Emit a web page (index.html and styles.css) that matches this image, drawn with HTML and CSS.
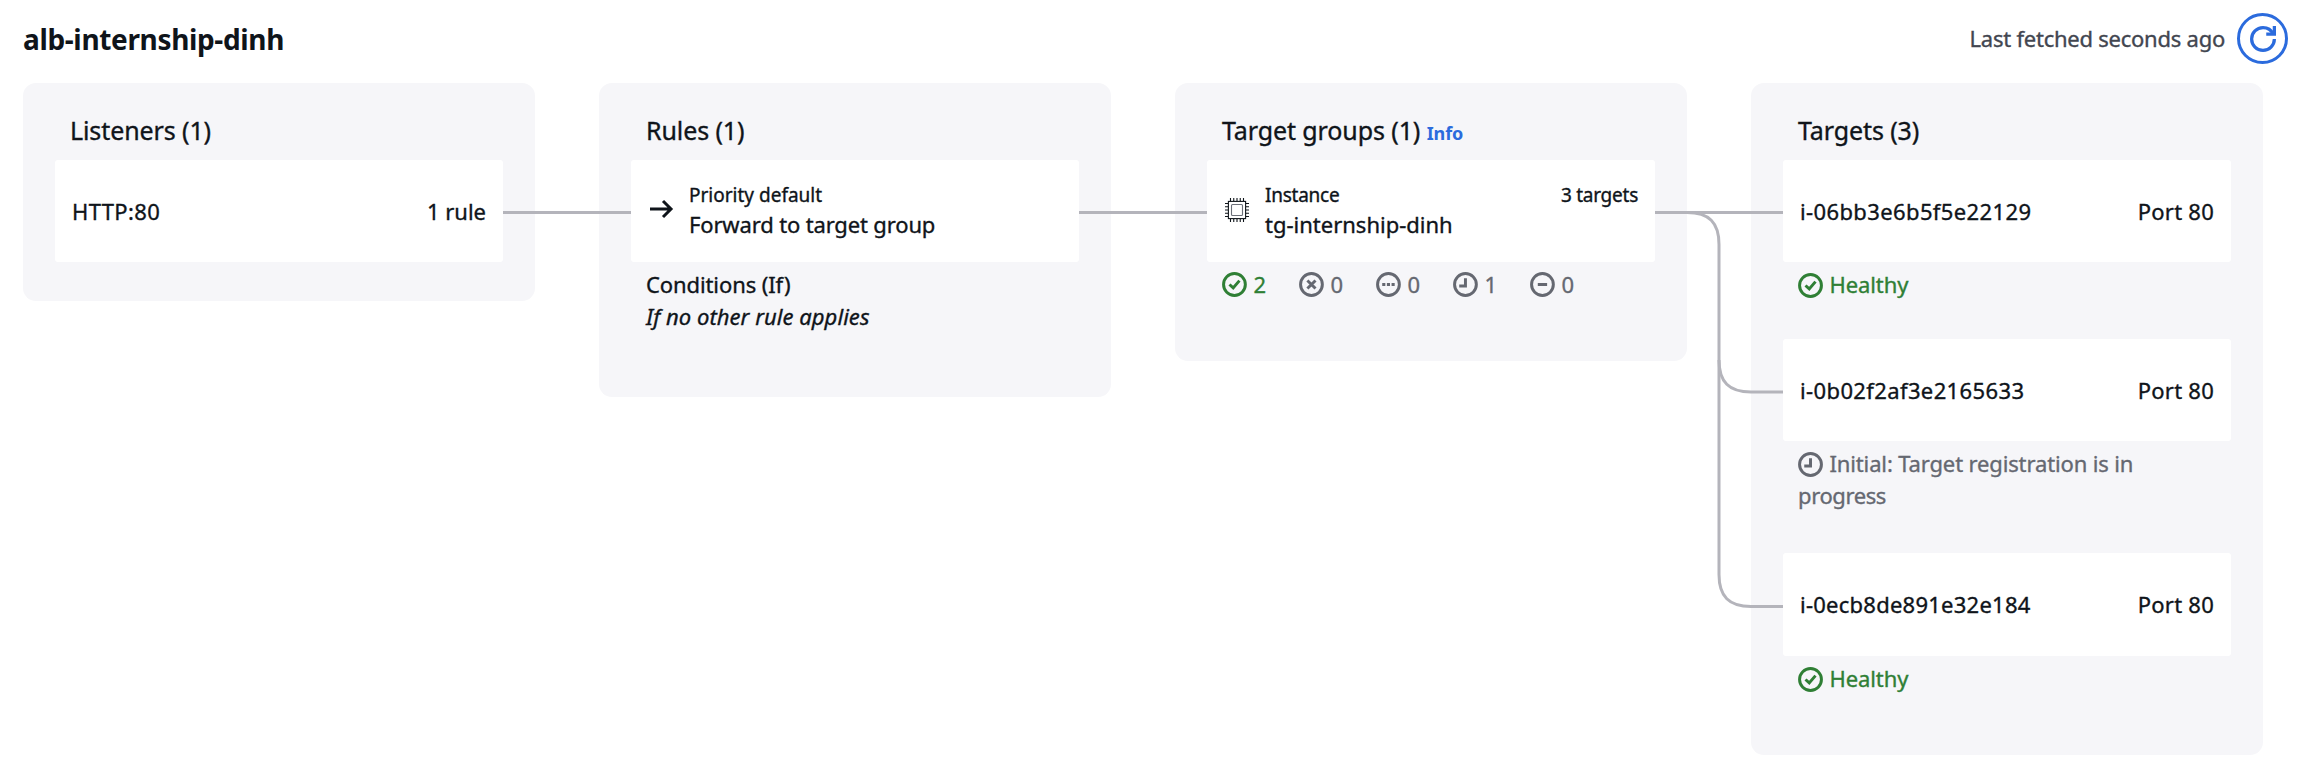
FILE: index.html
```html
<!DOCTYPE html>
<html lang="en">
<head>
<meta charset="utf-8">
<title>Resource map</title>
<link rel="stylesheet" href="styles.css">
</head>
<body>
<svg class="symbols" aria-hidden="true">
  <symbol id="i-ok" viewBox="0 0 16 16"><circle cx="8" cy="8" r="7"/><path d="m4.8 8 2.4 2.2 4-4.7"/></symbol>
  <symbol id="i-fail" viewBox="0 0 16 16"><circle cx="8" cy="8" r="7"/><path d="m5.4 5.4 5.2 5.2M10.6 5.4l-5.2 5.2"/></symbol>
  <symbol id="i-dots" viewBox="0 0 16 16"><circle cx="8" cy="8" r="7"/><path d="M4 8h2M7 8h2M10 8h2"/></symbol>
  <symbol id="i-clock" viewBox="0 0 16 16"><circle cx="8" cy="8" r="7"/><path d="M8 4v5H4"/></symbol>
  <symbol id="i-minus" viewBox="0 0 16 16"><circle cx="8" cy="8" r="7"/><path d="M5 8h6"/></symbol>
</svg>

<header class="header">
  <h1 class="title">alb-internship-dinh</h1>
  <div class="refresh">
    <span class="fetched">Last fetched seconds ago</span>
    <button class="refresh-button" aria-label="Refresh">
      <svg class="refresh-icon" viewBox="0 0 16 16"><path d="M15 8c0 3.87-3.13 7-7 7s-7-3.13-7-7 3.13-7 7-7c2.79 0 5.2 1.63 6.33 4"/><path d="M10 5h5V0"/></svg>
    </button>
  </div>
</header>

<main class="map">
  <section class="column column-listeners">
    <h2 class="heading">Listeners (1)</h2>
    <div class="card">
      <span class="wide">HTTP:80</span>
      <span class="end">1 rule</span>
    </div>
  </section>

  <section class="column column-rules">
    <h2 class="heading">Rules (1)</h2>
    <div class="card">
      <svg class="card-icon arrow" viewBox="0 0 24 24"><path d="M0 12h21M13 4l8 8-8 8"/></svg>
      <div class="lines">
        <div class="small">Priority default</div>
        <div class="forward">Forward to target group</div>
      </div>
    </div>
    <div class="details">
      <div class="conditions">Conditions (If)</div>
      <div class="condition">If no other rule applies</div>
    </div>
  </section>

  <section class="column column-groups">
    <h2 class="heading">Target groups (1) <a class="info">Info</a></h2>
    <div class="card">
      <svg class="card-icon chip" viewBox="0 0 24 24"><rect x="3.4" y="3.4" width="17.2" height="17.2"/><rect class="core" x="6.5" y="6.5" width="11" height="11" rx="1"/><path d="M5.5 0v3M8.75 0v3M12 0v3M15.25 0v3M18.5 0v3M5.5 21v3M8.75 21v3M12 21v3M15.25 21v3M18.5 21v3M0 5.5h3M0 8.75h3M0 12h3M0 15.25h3M0 18.5h3M21 5.5h3M21 8.75h3M21 12h3M21 15.25h3M21 18.5h3"/></svg>
      <div class="lines">
        <div class="small split"><span>Instance</span><span>3 targets</span></div>
        <div>tg-internship-dinh</div>
      </div>
    </div>
    <div class="details counts">
      <span class="count ok"><svg class="icon"><use href="#i-ok"/></svg>2</span>
      <span class="count muted"><svg class="icon"><use href="#i-fail"/></svg>0</span>
      <span class="count muted"><svg class="icon"><use href="#i-dots"/></svg>0</span>
      <span class="count muted"><svg class="icon"><use href="#i-clock"/></svg>1</span>
      <span class="count muted"><svg class="icon"><use href="#i-minus"/></svg>0</span>
    </div>
  </section>

  <section class="column column-targets">
    <h2 class="heading">Targets (3)</h2>
    <div class="card">
      <span class="wide">i-06bb3e6b5f5e22129</span>
      <span class="end port">Port 80</span>
    </div>
    <div class="details status ok"><svg class="icon"><use href="#i-ok"/></svg>Healthy</div>
    <div class="card">
      <span class="wide">i-0b02f2af3e2165633</span>
      <span class="end port">Port 80</span>
    </div>
    <div class="details status status-long muted"><svg class="icon"><use href="#i-clock"/></svg>Initial: Target registration is in <span class="tighter">progress</span></div>
    <div class="card card-last">
      <span>i-0ecb8de891e32e184</span>
      <span class="end port">Port 80</span>
    </div>
    <div class="details status ok"><svg class="icon"><use href="#i-ok"/></svg>Healthy</div>
  </section>

  <svg class="connectors" viewBox="0 83 2240 672">
    <path d="M480 212.5h128M1056 212.5h128M1632 212.5h128"/>
    <path d="M1664 212.500c22 0 32 10 32 32V574.500c0 22 10 32 32 32h32"/>
    <path d="M1696 360c0 22 10 32 32 32h32"/>
  </svg>
</main>
</body>
</html>
```
FILE: styles.css
```css
* { box-sizing: border-box; }

body {
  margin: 0;
  background: #fff;
  color: #0f141a;
  font: 400 22px/32px "Noto Sans", "Open Sans", sans-serif;
  -webkit-text-stroke: 0.35px currentColor;
}

.symbols { display: none; }

svg { fill: none; stroke: currentColor; }

.header {
  display: flex;
  justify-content: space-between;
  align-items: center;
  height: 83px;
  padding: 0 12px 6px 23px;
}

.title {
  margin: 0;
  font-size: 28px;
  line-height: 36px;
  letter-spacing: -0.35px;
  -webkit-text-stroke: 0;
}

.refresh { display: flex; align-items: center; gap: 12px; }

.fetched {
  padding-bottom: 2px;
  color: #424650;
  letter-spacing: -0.24px;
}

.refresh-button {
  display: grid;
  place-items: center;
  width: 51px;
  height: 51px;
  padding: 0;
  border: 3px solid #2b6bdd;
  border-radius: 50%;
  background: #fff;
  color: #2b6bdd;
}

.refresh-icon { width: 26px; height: 26px; stroke-width: 2; }

.map {
  position: relative;
  display: grid;
  grid-template-columns: repeat(4, 512px);
  gap: 64px;
  align-items: start;
  margin: 0 37px 0 23px;
}

.column {
  padding: 31px 32px 0;
  border-radius: 13px;
  background: #f6f6f9;
}

.column-listeners { height: 218px; }
.column-rules { height: 314px; }
.column-groups { height: 278px; }
.column-targets { height: 672px; }

.heading {
  margin: 0 0 14px;
  padding: 0 15px;
  font-size: 25px;
  font-weight: 400;
  line-height: 32px;
  letter-spacing: -0.1px;
}

.info {
  color: #2b6bdd;
  font-size: 18px;
  font-weight: 700;
  line-height: 1;
  -webkit-text-stroke: 0;
}

.card {
  display: flex;
  align-items: center;
  height: 102px;
  padding: 0 17px 1px 17px;
  border-radius: 3px;
  background: #fff;
}

.card-last { height: 103px; letter-spacing: 0.25px; }

.end { margin-left: auto; }
.wide { letter-spacing: 0.38px; }
.port { letter-spacing: 0.25px; }
.forward { letter-spacing: -0.15px; }
.tighter { letter-spacing: -0.4px; }

.lines { flex: 1; }
.small { font-size: 19px; line-height: 26px; }
.split {
  display: flex;
  justify-content: space-between;
  letter-spacing: -0.25px;
}

.card-icon { flex: none; width: 24px; height: 24px; }
.arrow { margin: 0 15px 3px 2px; stroke-width: 3; }
.chip { margin: 0 16px 2px 1px; stroke-width: 1.1; }
.core { stroke: #6b6f78; }

.details { padding: 6px 15px 0; }
.conditions { letter-spacing: -0.1px; }
.condition { font-style: italic; letter-spacing: 0.05px; }

.icon {
  width: 25px;
  height: 25px;
  margin-right: 6.5px;
  stroke-width: 1.9;
}

.ok { color: #2f7f35; }
.muted { color: #656871; }

.counts { display: flex; gap: 33px; }
.count { display: flex; align-items: center; width: 44px; }

.status { height: 77px; letter-spacing: -0.1px; }
.status-long { height: 112px; padding-right: 70px; letter-spacing: -0.14px; }
.status .icon { vertical-align: -5px; }

.connectors {
  position: absolute;
  top: 0;
  left: 0;
  width: 2240px;
  height: 672px;
  stroke: #b4b4bb;
  stroke-width: 3;
}
```
